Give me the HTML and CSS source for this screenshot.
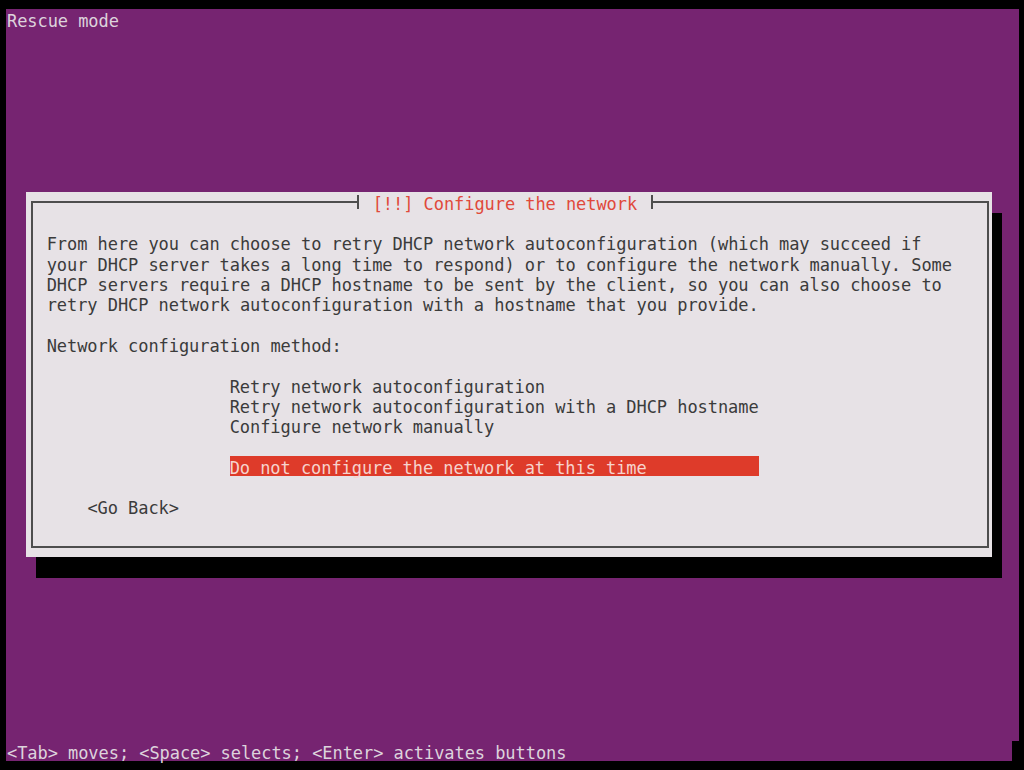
FILE: index.html
```html
<!DOCTYPE html>
<html lang="en">
<head>
<meta charset="utf-8">
<title>Rescue mode</title>
<link rel="stylesheet" href="styles.css">
</head>
<body>
<div class="screen">
  <div class="main">
    <div class="topline">Rescue mode</div>
    <div class="dialog">
      <fieldset class="frame">
        <legend class="title">[!!] Configure the network</legend>
        <p class="para">From here you can choose to retry DHCP network autoconfiguration (which may succeed if<br>your DHCP server takes a long time to respond) or to configure the network manually. Some<br>DHCP servers require a DHCP hostname to be sent by the client, so you can also choose to<br>retry DHCP network autoconfiguration with a hostname that you provide.</p>
        <p class="label">Network configuration method:</p>
        <ul class="options">
          <li>Retry network autoconfiguration</li>
          <li>Retry network autoconfiguration with a DHCP hostname</li>
          <li>Configure network manually</li>
          <li class="blank"></li>
          <li class="selected">Do not configure the network at this time</li>
        </ul>
        <div class="buttons"><span class="btn">&lt;Go Back&gt;</span></div>
      </fieldset>
    </div>
  </div>
  <div class="status">&lt;Tab&gt; moves; &lt;Space&gt; selects; &lt;Enter&gt; activates buttons</div>
</div>
</body>
</html>
```

FILE: styles.css
```css
html, body {
  margin: 0;
  padding: 0;
  background: #000;
  width: 1024px;
  height: 770px;
  overflow: hidden;
}

.screen {
  padding: 9px 0 0 6px;
  font-family: "DejaVu Sans Mono", "Liberation Mono", monospace;
  font-size: 17px;
  letter-spacing: -0.064px;
  line-height: 20.32px;
  white-space: nowrap;
}

.main {
  width: 1013px;
  height: 731.5px;
  background: #762471;
  color: #ddd3dc;
  overflow: hidden;
}

.topline {
  height: 20.32px;
  padding: 2px 0 0 1px;
  box-sizing: border-box;
}

.dialog {
  margin: 162.56px 0 0 20px;
  width: 966px;
  height: 365px;
  box-sizing: border-box;
  background: #e7e2e6;
  color: #3b3b3b;
  box-shadow: 10px 21px 0 #000;
  padding: 3px 3px 9px 5px;
}

.frame {
  margin: 0;
  height: 100%;
  box-sizing: border-box;
  border: 2px solid #4e4e4e;
  padding: 25.5px 0 0 13.7px;
  min-width: 0;
}

.title {
  margin-left: 310px;
  padding: 0 14px;
  height: 14px;
  line-height: 18px;
  border-left: 2px solid #4e4e4e;
  border-right: 2px solid #4e4e4e;
  color: #e0493b;
  box-sizing: border-box;
}

.para,
.label {
  margin: 0 0 20.32px 0;
}

.options {
  list-style: none;
  margin: 0 0 20.32px 183px;
  padding: 0;
}

.options li {
  height: 20.32px;
}

.options .selected {
  width: 529px;
  background: linear-gradient(#de3b2a calc(100% - 2px), transparent 0);
  box-shadow: 0 -2px 0 #de3b2a;
  color: #f6d3cd;
}

.buttons {
  padding-left: 40.7px;
}

.status {
  width: 1006px;
  height: 20.32px;
  padding: 2px 0 0 1px;
  background: #762471;
  color: #ddd3dc;
  box-sizing: border-box;
}
```
